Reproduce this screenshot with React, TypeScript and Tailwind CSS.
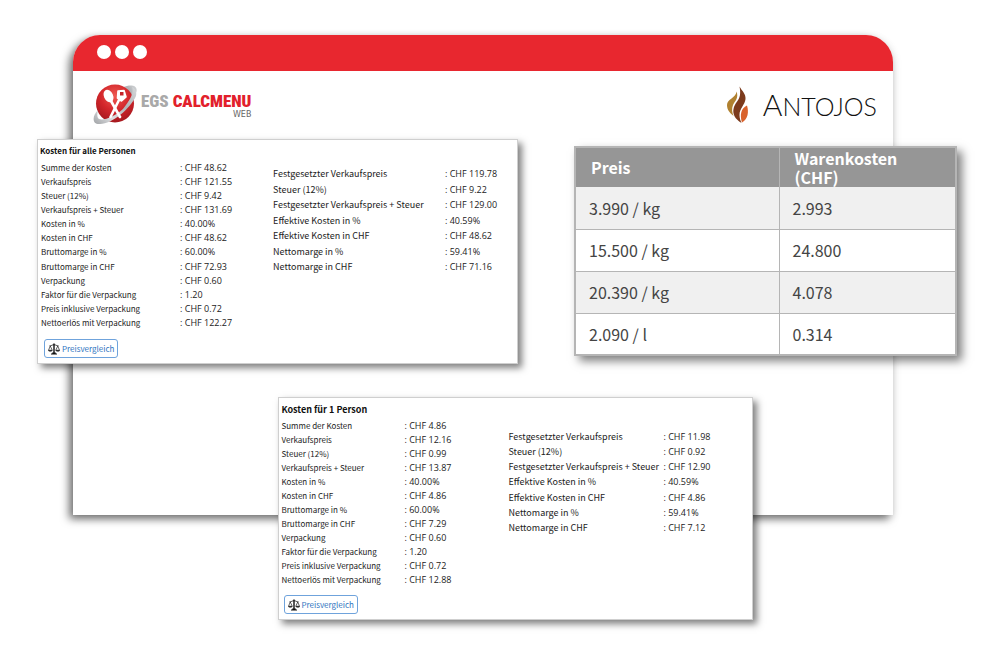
type Row = [string, string];

const allLeft: Row[] = [
  ["Summe der Kosten", "CHF 48.62"],
  ["Verkaufspreis", "CHF 121.55"],
  ["Steuer (12%)", "CHF 9.42"],
  ["Verkaufspreis + Steuer", "CHF 131.69"],
  ["Kosten in %", "40.00%"],
  ["Kosten in CHF", "CHF 48.62"],
  ["Bruttomarge in %", "60.00%"],
  ["Bruttomarge in CHF", "CHF 72.93"],
  ["Verpackung", "CHF 0.60"],
  ["Faktor für die Verpackung", "1.20"],
  ["Preis inklusive Verpackung", "CHF 0.72"],
  ["Nettoerlös mit Verpackung", "CHF 122.27"],
];

const allRight: Row[] = [
  ["Festgesetzter Verkaufspreis", "CHF 119.78"],
  ["Steuer (12%)", "CHF 9.22"],
  ["Festgesetzter Verkaufspreis + Steuer", "CHF 129.00"],
  ["Effektive Kosten in %", "40.59%"],
  ["Effektive Kosten in CHF", "CHF 48.62"],
  ["Nettomarge in %", "59.41%"],
  ["Nettomarge in CHF", "CHF 71.16"],
];

const oneLeft: Row[] = [
  ["Summe der Kosten", "CHF 4.86"],
  ["Verkaufspreis", "CHF 12.16"],
  ["Steuer (12%)", "CHF 0.99"],
  ["Verkaufspreis + Steuer", "CHF 13.87"],
  ["Kosten in %", "40.00%"],
  ["Kosten in CHF", "CHF 4.86"],
  ["Bruttomarge in %", "60.00%"],
  ["Bruttomarge in CHF", "CHF 7.29"],
  ["Verpackung", "CHF 0.60"],
  ["Faktor für die Verpackung", "1.20"],
  ["Preis inklusive Verpackung", "CHF 0.72"],
  ["Nettoerlös mit Verpackung", "CHF 12.88"],
];

const oneRight: Row[] = [
  ["Festgesetzter Verkaufspreis", "CHF 11.98"],
  ["Steuer (12%)", "CHF 0.92"],
  ["Festgesetzter Verkaufspreis + Steuer", "CHF 12.90"],
  ["Effektive Kosten in %", "40.59%"],
  ["Effektive Kosten in CHF", "CHF 4.86"],
  ["Nettomarge in %", "59.41%"],
  ["Nettomarge in CHF", "CHF 7.12"],
];

const prices: Row[] = [
  ["3.990 / kg", "2.993"],
  ["15.500 / kg", "24.800"],
  ["20.390 / kg", "4.078"],
  ["2.090 / l", "0.314"],
];

function CostList({ rows, className }: { rows: Row[]; className: string }) {
  return (
    <dl className={`flex flex-col justify-between leading-[14px] whitespace-nowrap text-[#222] ${className}`}>
      {rows.map(([label, value]) => (
        <div key={label} className="flex">
          <dt className="flex-1">{label}</dt>
          <dd className="w-[72px] font-['Open_Sans',sans-serif] text-[9px]">: {value}</dd>
        </div>
      ))}
    </dl>
  );
}

function CompareButton() {
  return (
    <button
      type="button"
      className="flex h-[19px] items-center gap-0.5 rounded-[3px] border border-[#6fa3dc] bg-white px-[3px] text-[8px] leading-[14px] text-[#2f74c0]"
    >
      <svg className="size-3" viewBox="0 0 24 24" fill="none" stroke="#111" strokeWidth="1.600" aria-hidden="true">
        <path d="M12 1V20" strokeWidth="2.800" />
        <path d="M3 5.500C7 6 8 3.500 12 3.500S17 6 21 5.500" />
        <path d="M6 22H18M8.500 20H15.500" strokeWidth="2.400" />
        <path d="M4.500 6L1 14.500H8.500L4.500 6M19.500 6L15.500 14.500H23L19.500 6" strokeWidth="1.300" />
        <path d="M0 14.500H9C8.500 18 1 18 0 14.500ZM15 14.500H24C23.500 18 16 18 15 14.500Z" fill="#111" stroke="none" />
      </svg>
      Preisvergleich
    </button>
  );
}

const cardClass = "border border-[#cfcfcf] bg-white shadow-[4px_4px_7px_rgba(0,0,0,0.5)]";

function EgsLogo() {
  return (
    <div className="flex items-center gap-1">
      <svg className="h-[42px] w-[44px]" viewBox="0 0 44 42" aria-hidden="true">
        <defs>
          <radialGradient id="ball" cx="0.5" cy="0.3" r="0.7">
            <stop offset="0" stopColor="#ee5a52" />
            <stop offset="0.55" stopColor="#d3262b" />
            <stop offset="1" stopColor="#a5181e" />
          </radialGradient>
          <linearGradient id="ring" x1="0" y1="1" x2="1" y2="0">
            <stop offset="0" stopColor="#9fa2a5" />
            <stop offset="0.3" stopColor="#dfe0e2" />
            <stop offset="0.6" stopColor="#b0b3b6" />
            <stop offset="1" stopColor="#d6d8da" />
          </linearGradient>
        </defs>
        <path d="M30 3C38 0 46 1 43 9C42 13 39 17 36 20L33 7Z" fill="url(#ring)" />
        <circle cx="22" cy="19.500" r="19" fill="url(#ball)" />
        <path d="M5 26C-1 32-1 40 6 40C18 41 37 25 43 12C44 7 42 4 39 3C41 8 38 15 30 25C22 32 11 37 6 35C4 34 4 30 5 26Z" fill="url(#ring)" />
        <ellipse cx="15.500" cy="12" rx="4.600" ry="6.600" transform="rotate(-24 15.500 12)" fill="#fff" />
        <path d="M18 17L27 33" stroke="#fff" strokeWidth="2.600" strokeLinecap="round" />
        <path d="M25 7L31 6.500L33 13L28.500 17L24.500 14Z" fill="#fff" stroke="#fff" strokeWidth="1.600" strokeLinejoin="round" />
        <path d="M26.500 15L17.500 33" stroke="#fff" strokeWidth="2.600" strokeLinecap="round" />
        <rect x="27" y="8" width="3.500" height="3.500" fill="#c52328" />
      </svg>
      <div className="flex flex-col items-end whitespace-nowrap">
        <div className="font-['Roboto_Condensed','Open_Sans_Condensed','Noto_Sans_CJK_SC',sans-serif] text-[17px] leading-5 font-black">
          <span className="text-[#a9a9a9]">EGS</span> <span className="text-[#e2202b]">CALCMENU</span>
        </div>
        <div className="font-['DejaVu_Sans',sans-serif] text-[8px] leading-2 text-[#666]">WEB</div>
      </div>
    </div>
  );
}

function AntojosLogo() {
  return (
    <div className="flex items-center gap-[14px]">
      <svg className="h-[38px] w-[22px]" viewBox="0 0 22 38" aria-hidden="true">
        <path d="M9.500 5.500C12 12 8 15 6 19C4.500 23 5 26 6.500 30C3 27 0 24 0 19C0 13 9 12 9.500 5.500Z" fill="#b08130" />
        <path d="M12.500 0.500C15 5 19 8 18.500 13C18 19 12.500 22 12.500 29C12.500 32 13.500 35 14.500 37C8 33 5.500 28 6.500 23C7.500 17 12 15 13 9C13.400 6 13 3 12.500 0.500Z" fill="#7c3a1c" />
        <path d="M20 19.500C22 26 21 33 15 36.500C12.500 29 14 22 20 19.500Z" fill="#d9622b" />
      </svg>
      <div className="font-[Lato,sans-serif] text-[30px] leading-8 font-light whitespace-nowrap text-[#111]">
        A<span className="text-[25px]">NTOJOS</span>
      </div>
    </div>
  );
}

export default function App() {
  return (
    <main className="min-h-screen bg-white pt-[35px] pr-[106px] pb-[137px] pl-[73px] font-['Noto_Sans_CJK_SC',sans-serif]">
      <section className="flex flex-col rounded-t-[27px] bg-white shadow-[-4px_4px_9px_rgba(0,0,0,0.55),2px_2px_8px_rgba(0,0,0,0.08)]">
        <header className="flex h-9 items-center gap-1 rounded-t-[27px] bg-[#e8272f] px-6 pb-[3px]">
          <span className="size-[14px] rounded-full bg-white" />
          <span className="size-[14px] rounded-full bg-white" />
          <span className="size-[14px] rounded-full bg-white" />
        </header>
        <div className="flex h-[68px] items-center justify-between pr-4 pl-5">
          <EgsLogo />
          <AntojosLogo />
        </div>

        <div className="-mr-16 -ml-9 flex items-start justify-between">
          <article className={`h-[225px] w-[481px] ${cardClass}`}>
            <h2 className="px-0.5 pt-1 text-[8px] leading-[14px] font-bold text-[#111]">Kosten für alle Personen</h2>
            <div className="mt-[3px] flex items-start pl-[3px]">
              <CostList rows={allLeft} className="h-[169px] w-[212px] text-[8px]" />
              <CostList rows={allRight} className="mt-[6px] ml-[21px] h-[107px] w-[245px] text-[9px]" />
            </div>
            <div className="px-[6px] pt-[9px]">
              <CompareButton />
            </div>
          </article>

          <table className="mt-[7px] w-[383px] table-fixed border-collapse border-2 border-[#b5b5b5] bg-white text-base shadow-[5px_5px_9px_rgba(0,0,0,0.5)]">
            <thead>
              <tr className="h-10 bg-[#969696] text-left leading-[19px] text-white">
                <th className="w-[204px] border-r border-[#b5b5b5] px-[15px] py-0">Preis</th>
                <th className="px-[15px] py-0">
                  Warenkosten
                  <br />
                  (CHF)
                </th>
              </tr>
            </thead>
            <tbody>
              {prices.map(([price, cost]) => (
                <tr key={price} className="h-[42px] border-b border-[#b5b5b5] leading-6 text-[#444] odd:bg-[#f0f0f0]">
                  <td className="border-r border-[#b5b5b5] px-[13px] py-0">{price}</td>
                  <td className="px-[13px] py-0">{cost}</td>
                </tr>
              ))}
            </tbody>
          </table>
        </div>

        <article className={`mx-auto mt-[33px] -mb-[105px] h-[223px] w-[475px] translate-x-8 ${cardClass}`}>
          <h2 className="px-[3px] pt-1 text-[9px] leading-4 font-bold text-[#111]">Kosten für 1 Person</h2>
          <div className="mt-px flex items-start pl-[3px]">
            <CostList rows={oneLeft} className="h-[166px] w-[195px] text-[8px]" />
            <CostList rows={oneRight} className="mt-[11px] ml-8 h-[105px] w-[227px] text-[9px]" />
          </div>
          <div className="px-[5px] pt-[10px]">
            <CompareButton />
          </div>
        </article>
      </section>
    </main>
  );
}
